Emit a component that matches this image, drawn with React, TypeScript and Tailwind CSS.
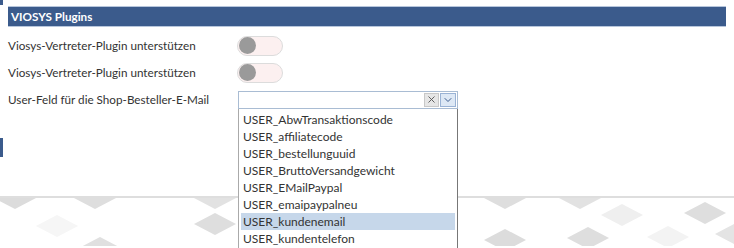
import { ChevronDown, X } from 'lucide-react';

const options = [
  'USER_AbwTransaktionscode',
  'USER_affiliatecode',
  'USER_bestellunguuid',
  'USER_BruttoVersandgewicht',
  'USER_EMailPaypal',
  'USER_emaipaypalneu',
  'USER_kundenemail',
  'USER_kundentelefon',
];

// diamonds of the page background: [centerX, centerY, fill]
const diamonds: [number, number, string][] = [
  [15, 0, '#dcdcdc'],
  [95, 0, '#dedede'],
  [215, 0, '#e2e2e2'],
  [375, 0, '#e4e4e4'],
  [505, 0, '#dedede'],
  [580, 0, '#e2e2e2'],
  [57, 28, '#f6f6f6'],
  [215, 26, '#dedede'],
  [622, 17, '#efefef'],
  [705, 15, '#dedede'],
  [100, 50, '#e0e0e0'],
  [505, 42, '#dcdcdc'],
  [588, 40, '#dedede'],
  [668, 39, '#f3f3f3'],
  [736, 36, '#e4e4e4'],
];

function Toggle() {
  return (
    <div className="w-[46px] h-[20px] rounded-full bg-[#fcf0f0] border border-[#dcdcdc] flex items-center pl-[1px]">
      <div className="w-[17px] h-[17px] rounded-full bg-[#9a9a9a]" />
    </div>
  );
}

export default function App() {
  return (
    <div className="w-[734px] h-[248px] relative overflow-hidden bg-white text-[#333] font-['Lato','Open_Sans',sans-serif]">
      <div className="absolute left-0 top-0 w-[3px] h-[5px] bg-[#3b5b8c]" />
      <div className="absolute left-0 top-[138px] w-[3px] h-[19px] bg-[#3b5b8c]" />

      <div className="h-[198px] pt-[6px] border-b-2 border-[#dedede]">
        <div className="ml-2 w-[718px] border-y border-[#b7c6dc]">
          <div className="h-[19px] bg-[#3b5b8c] text-white text-[11.7px] font-bold leading-[19px] pl-[3px]">
            VIOSYS Plugins
          </div>
        </div>

        <div className="mt-[5px] pl-2 text-[11.7px]">
          <div className="flex items-center h-[27px]">
            <div className="w-[229px]">Viosys-Vertreter-Plugin unterstützen</div>
            <Toggle />
          </div>
          <div className="flex items-center h-[27px]">
            <div className="w-[229px]">Viosys-Vertreter-Plugin unterstützen</div>
            <Toggle />
          </div>
          <div className="flex items-center h-[27px]">
            <div className="w-[230px]">User-Feld für die Shop-Besteller-E-Mail</div>
            <div className="relative w-[220px] h-[18px] border border-[#a9bcd3] bg-white flex items-center justify-end pr-[1px] gap-[1px]">
              <div className="w-[15px] h-[14px] bg-[#e6e6e6] border border-[#c8c8c8] flex items-center justify-center">
                <X size={11} strokeWidth={2} className="text-[#555]" />
              </div>
              <div className="w-[16px] h-[14px] bg-[#dde8f5] border border-[#9ab3d5] flex items-center justify-center">
                <ChevronDown size={12} strokeWidth={2} className="text-[#3b5b8c]" />
              </div>

              <div className="absolute left-[-1px] top-[17px] w-[220px] h-[160px] bg-white border-l border-[#aaa] border-r border-r-[#777] pt-[2px] px-[2px] z-10 text-[12px]">
                {options.map((o) => (
                  <div
                    key={o}
                    className={
                      o === 'USER_kundenemail'
                        ? 'h-[17px] leading-[17px] pl-[2px] bg-[#c6d7ea]'
                        : 'h-[17px] leading-[17px] pl-[2px]'
                    }
                  >
                    {o}
                  </div>
                ))}
              </div>
            </div>
          </div>
        </div>
      </div>

      <svg width="734" height="48" className="block">
        {diamonds.map(([x, y, fill], i) => (
          <polygon
            key={i}
            points={`${x - 21},${y} ${x},${y - 11} ${x + 21},${y} ${x},${y + 11}`}
            fill={fill}
          />
        ))}
      </svg>
    </div>
  );
}
